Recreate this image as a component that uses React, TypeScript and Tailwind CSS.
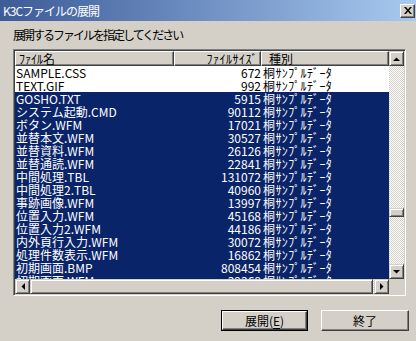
import React from "react";

const rows: { name: string; size: string; sel: boolean }[] = [
  { name: "SAMPLE.CSS", size: "672", sel: false },
  { name: "TEXT.GIF", size: "992", sel: false },
  { name: "GOSHO.TXT", size: "5915", sel: true },
  { name: "システム起動.CMD", size: "90112", sel: true },
  { name: "ボタン.WFM", size: "17021", sel: true },
  { name: "並替本文.WFM", size: "30527", sel: true },
  { name: "並替資料.WFM", size: "26126", sel: true },
  { name: "並替通読.WFM", size: "22841", sel: true },
  { name: "中間処理.TBL", size: "131072", sel: true },
  { name: "中間処理2.TBL", size: "40960", sel: true },
  { name: "事跡画像.WFM", size: "13997", sel: true },
  { name: "位置入力.WFM", size: "45168", sel: true },
  { name: "位置入力2.WFM", size: "44186", sel: true },
  { name: "内外頁行入力.WFM", size: "30072", sel: true },
  { name: "処理件数表示.WFM", size: "16862", sel: true },
  { name: "初期画面.BMP", size: "808454", sel: true },
  { name: "初期画面.WFM", size: "39368", sel: true },
];

function Arrow({ dir }: { dir: "up" | "down" | "left" | "right" }) {
  const pts =
    dir === "up"
      ? "0,4 7,4 3.5,0.5"
      : dir === "down"
      ? "0,0 7,0 3.5,3.5"
      : dir === "left"
      ? "4,0 4,7 0.5,3.5"
      : "0,0 0,7 3.5,3.5";
  const w = dir === "up" || dir === "down" ? 7 : 4;
  const h = dir === "up" || dir === "down" ? 4 : 7;
  return (
    <svg width={w} height={h} viewBox={`0 0 ${w} ${h}`} className="block">
      <polygon points={pts} fill="#000" />
    </svg>
  );
}

function SBtn({ dir }: { dir: "up" | "down" | "left" | "right" }) {
  return (
    <div className="w-[15px] h-[15px] shrink-0 flex items-center justify-center bg-[#d4d0c8] border-t border-l border-t-[#d4d0c8] border-l-[#d4d0c8] border-b border-r border-b-[#404040] border-r-[#404040] shadow-[inset_1px_1px_#ffffff,inset_-1px_-1px_#808080]">
      <Arrow dir={dir} />
    </div>
  );
}

function HeaderCell({ w, children, right }: { w?: string; children: React.ReactNode; right?: boolean }) {
  return (
    <div
      className={
        (w ?? "flex-1") +
        " h-[15px] shrink-0 bg-[#d4d0c8] border-t border-l border-t-white border-l-white border-b border-r border-b-[#404040] border-r-[#404040] shadow-[inset_-1px_-1px_#808080] text-[12px] leading-[13px] whitespace-nowrap overflow-hidden " +
        (right ? "text-right pr-[2px]" : "pl-[3px]")
      }
    >
      {children}
    </div>
  );
}

export default function App() {
  return (
    <div className="w-[416px] h-[341px] bg-[#d4d0c8] overflow-hidden font-['Noto_Sans_CJK_JP',sans-serif] text-black flex flex-col">
      {/* title bar */}
      <div className="h-[21px] shrink-0 flex items-center justify-between bg-gradient-to-r from-[#3d5b97] to-[#a8caf0] pl-[3px] pr-[1px]">
        <span className="text-white text-[12px] leading-[12px] tracking-[-1px]">K3Cファイルの展開</span>
        <div className="w-[15px] h-[14px] flex items-center justify-center bg-[#d4d0c8] border-t border-l border-t-white border-l-white border-b border-r border-b-[#404040] border-r-[#404040] shadow-[inset_-1px_-1px_#808080]">
          <svg width="8" height="7" viewBox="0 0 8 7" className="block">
            <path d="M0 0 L2 0 L4 2.5 L6 0 L8 0 L5 3.5 L8 7 L6 7 L4 4.5 L2 7 L0 7 L3 3.5 Z" fill="#000" />
          </svg>
        </div>
      </div>

      {/* prompt */}
      <div className="pl-[13px] pt-[7px] text-[12px] leading-[14px] tracking-[-2px] whitespace-nowrap">
        展開するファイルを指定してください
      </div>

      {/* list view */}
      <div className="mt-[7px] ml-[13px] w-[393px] h-[247px] shrink-0 border-t border-l border-t-[#808080] border-l-[#808080] border-b border-r border-b-white border-r-white shadow-[inset_1px_1px_#404040,inset_-1px_-1px_#d4d0c8] p-[1px]">
        <div className="grid grid-cols-[374px_15px] grid-rows-[228px_15px] bg-white">
          {/* list */}
          <div className="overflow-hidden flex flex-col">
            <div className="flex shrink-0">
              <HeaderCell w="w-[159px]">ﾌｧｲﾙ名</HeaderCell>
              <HeaderCell w="w-[87px]" right>
                <span className="tracking-[0.5px]">ﾌｧｲﾙｻｲｽﾞ</span>
              </HeaderCell>
              <HeaderCell>
                <span className="pl-[4px]">種別</span>
              </HeaderCell>
            </div>
            {rows.map((r, i) => (
              <div
                key={i}
                className={
                  "flex h-[13px] shrink-0 text-[12px] leading-[13px] whitespace-nowrap " +
                  (r.sel ? "bg-[#0a246a] text-white" : "bg-white text-black")
                }
              >
                <div className="w-[159px] shrink-0 pl-[1px] overflow-hidden">{r.name}</div>
                <div className="w-[87px] shrink-0 text-right">{r.size}</div>
                <div className="pl-[2px] tracking-[0.4px]">桐ｻﾝﾌﾟﾙﾃﾞｰﾀ</div>
              </div>
            ))}
          </div>

          {/* vertical scrollbar */}
          <div className="flex flex-col bg-[repeating-conic-gradient(#ffffff_0%_25%,#d4d0c8_0%_50%)] bg-[length:2px_2px]">
            <SBtn dir="up" />
            <div className="flex-1 flex flex-col">
              <div className="h-[142px]" />
              <div className="h-[9px] bg-[#d4d0c8] border-t border-l border-t-[#d4d0c8] border-l-[#d4d0c8] border-b border-r border-b-[#404040] border-r-[#404040] shadow-[inset_1px_1px_#ffffff,inset_-1px_-1px_#808080]" />
            </div>
            <SBtn dir="down" />
          </div>

          {/* horizontal scrollbar */}
          <div className="flex bg-[repeating-conic-gradient(#ffffff_0%_25%,#d4d0c8_0%_50%)] bg-[length:2px_2px]">
            <SBtn dir="left" />
            <div className="flex-1 mr-[1px] bg-[#d4d0c8] border-t border-l border-t-[#d4d0c8] border-l-[#d4d0c8] border-b border-r border-b-[#404040] border-r-[#404040] shadow-[inset_1px_1px_#ffffff,inset_-1px_-1px_#808080]" />
            <SBtn dir="right" />
          </div>

          {/* corner */}
          <div className="bg-[#d4d0c8]" />
        </div>
      </div>

      {/* buttons */}
      <div className="mt-[14px] ml-[221px] flex gap-[13px]">
        <div className="w-[87px] h-[21px] border border-black">
          <div className="w-full h-full flex items-center justify-center border-t border-l border-t-white border-l-white border-b border-r border-b-[#404040] border-r-[#404040] shadow-[inset_-1px_-1px_#808080] text-[12px] leading-[12px]">
            展開(<span className="underline underline-offset-[2px]">E</span>)
          </div>
        </div>
        <div className="w-[88px] h-[21px] flex items-center justify-center border-t border-l border-t-white border-l-white border-b border-r border-b-[#404040] border-r-[#404040] shadow-[inset_-1px_-1px_#808080] text-[12px] leading-[12px]">
          終了
        </div>
      </div>
    </div>
  );
}
